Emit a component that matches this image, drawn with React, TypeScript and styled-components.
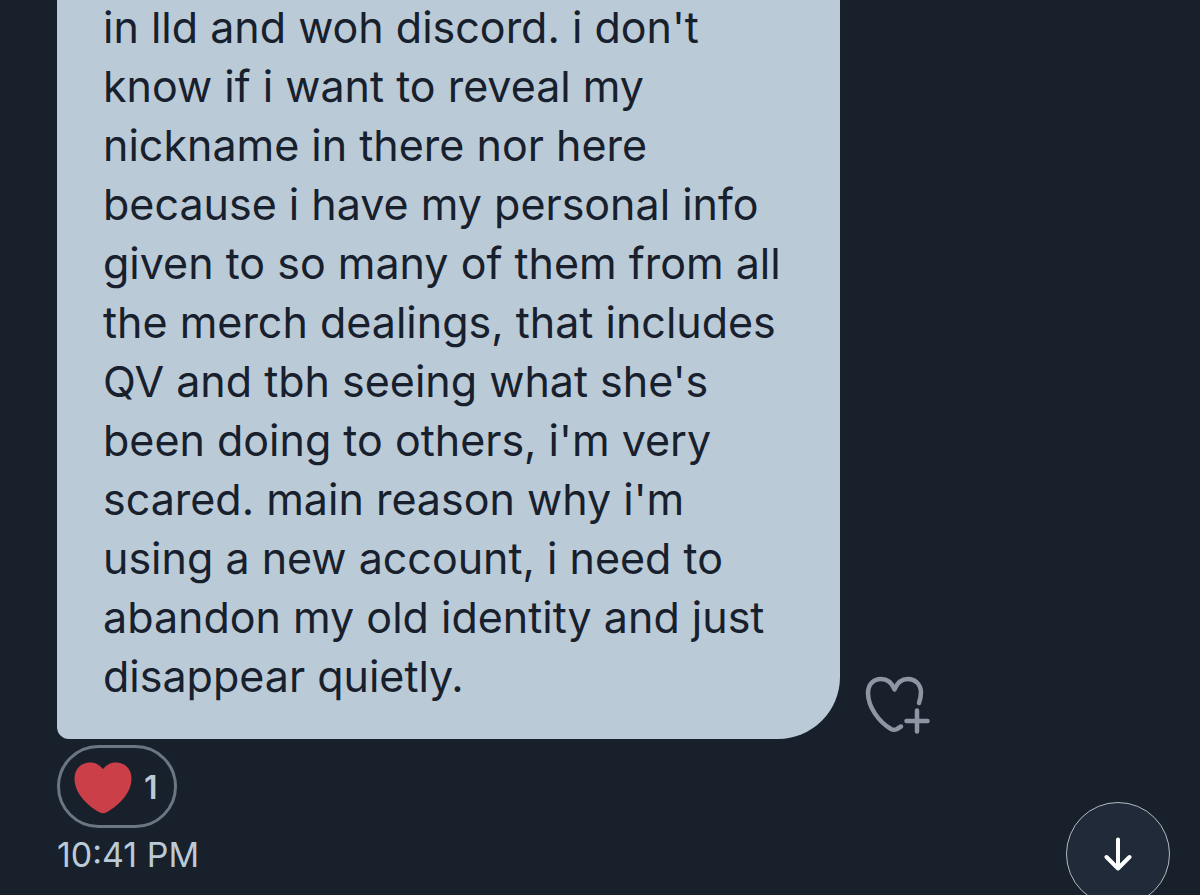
import React from "react";
import styled, { createGlobalStyle } from "styled-components";

const GlobalStyle = createGlobalStyle`
  *, *::before, *::after { box-sizing: border-box; }
  body {
    margin: 0;
    background: #18202b;
    font-family: Inter, "Liberation Sans", sans-serif;
  }
`;

const Thread = styled.main`
  display: flex;
  flex-direction: column;
  justify-content: flex-end;
  height: 100vh;
  padding: 0 57px 20px;
  overflow: hidden;
`;

const MessageRow = styled.div`
  display: flex;
  flex-shrink: 0;
  align-items: flex-end;
  gap: 25px;
`;

const Bubble = styled.p`
  margin: 0;
  width: 783px;
  flex-shrink: 0;
  padding: 0 46px 33px;
  border-radius: 0 0 62px 12px;
  background: #bacad7;
  color: #17202c;
  font-size: 43px;
  line-height: 59px;
  white-space: pre;
`;

const IconButton = styled.button`
  display: flex;
  margin: 0 0 4px;
  padding: 0;
  border: 0;
  background: none;
  color: #8e96a3;
  cursor: pointer;
`;

const Reaction = styled.button`
  display: flex;
  flex-shrink: 0;
  align-items: center;
  align-self: flex-start;
  gap: 12px;
  height: 83px;
  margin: 6px 0 0;
  padding: 2px 16px 0 14px;
  border: 3px solid #6b7583;
  border-radius: 42px;
  background: none;
  color: #bacad7;
  font-family: inherit;
  font-size: 32px;
  font-weight: 600;
  cursor: pointer;
`;

const Time = styled.time`
  margin-top: 7px;
  color: #bacad7;
  font-size: 34px;
  line-height: 40px;
`;

const ScrollButton = styled.button`
  position: fixed;
  right: 30px;
  bottom: -11px;
  display: flex;
  align-items: center;
  justify-content: center;
  width: 104px;
  height: 104px;
  padding: 0;
  border: 1px solid #b4bac2;
  border-radius: 50%;
  background: #202a38;
  color: #fff;
  cursor: pointer;
`;

const message = `in lld and woh discord. i don't
know if i want to reveal my
nickname in there nor here
because i have my personal info
given to so many of them from all
the merch dealings, that includes
QV and tbh seeing what she's
been doing to others, i'm very
scared. main reason why i'm
using a new account, i need to
abandon my old identity and just
disappear quietly.`;

const HeartPlusIcon = () => (
  <svg width="66" height="60" viewBox="15 15 66 60" fill="none" stroke="currentColor" strokeWidth="4.5" strokeLinecap="round" strokeLinejoin="round" aria-hidden="true">
    <path d="M69 43C70 40 71 36 71 32C70.500 24 65 19 58 19C51.500 19 47 23 44.500 29.500C42 23 37.500 19 31 19C23.500 19 18 24.500 18 33C18 47 29 62 41 69Q44 70.500 47 69L51 66.500" />
    <path d="M67 50.500v21M56.500 61h21" />
  </svg>
);

const HeartIcon = () => (
  <svg width="58" height="52" viewBox="0 0 58 52" fill="#cb3f49" aria-hidden="true">
    <path d="M29 7C25 2.500 21 0.500 16 0.500C7 0.500 0.500 7 0.500 16.500C0.500 31 13 43.500 25 50Q29 52.500 33 50C45 43.500 57.500 31 57.500 16.500C57.500 7 51 0.500 42 0.500C37 0.500 33 2.500 29 7Z" />
  </svg>
);

const ArrowDownIcon = () => (
  <svg width="28" height="34" viewBox="0 0 28 34" fill="none" stroke="currentColor" strokeWidth="4" strokeLinecap="round" strokeLinejoin="round" aria-hidden="true">
    <path d="M14 2.500v29M2.500 20L14 31.500L25.500 20" />
  </svg>
);

export default function App() {
  return (
    <>
      <GlobalStyle />
      <Thread>
        <MessageRow>
          <Bubble>{message}</Bubble>
          <IconButton aria-label="Add reaction">
            <HeartPlusIcon />
          </IconButton>
        </MessageRow>
        <Reaction>
          <HeartIcon />
          <span>1</span>
        </Reaction>
        <Time>10:41 PM</Time>
      </Thread>
      <ScrollButton aria-label="Scroll to latest">
        <ArrowDownIcon />
      </ScrollButton>
    </>
  );
}
